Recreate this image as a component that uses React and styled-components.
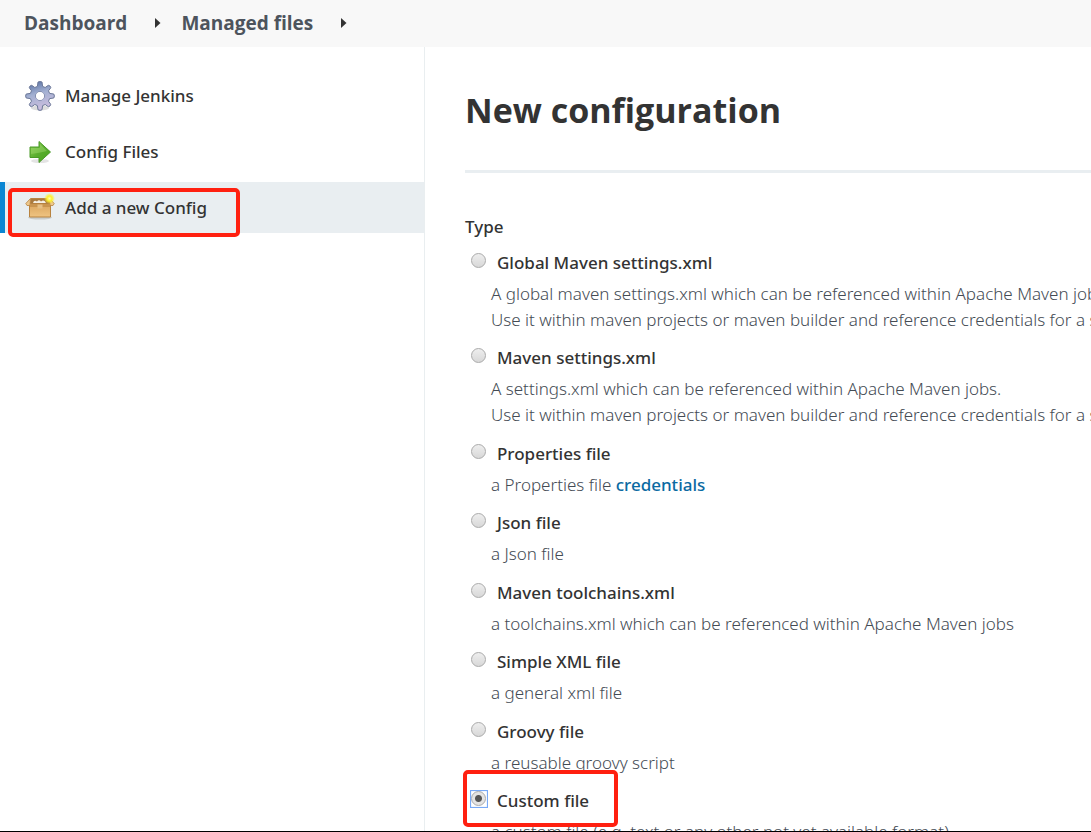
import React, { useState } from "react";
import styled, { createGlobalStyle, css } from "styled-components";

const GlobalStyle = createGlobalStyle`
  *, *::before, *::after { box-sizing: border-box; }
  body {
    margin: 0;
    background: #fff;
    color: #333;
    font-family: "Noto Sans", "Open Sans", sans-serif;
    font-size: 17px;
    line-height: 26px;
  }
`;

const Page = styled.div`
  display: flex;
  flex-direction: column;
  height: 100vh;
  overflow: hidden;
  border-bottom: 1px solid #000;
`;

const Breadcrumbs = styled.nav`
  display: flex;
  flex: none;
  align-items: center;
  height: 47px;
  padding: 0 24px 2px;
  background: #f8f8f8;
`;

const Crumb = styled.a`
  color: #4d545d;
  font-family: "Open Sans", sans-serif;
  font-size: 19px;
  font-weight: 700;
  text-decoration: none;
`;

const CrumbArrow = styled.svg`
  width: 6px;
  height: 10px;
  margin: 0 20px 0 28px;
  fill: #333;
`;

const Columns = styled.div`
  display: flex;
  flex: 1;
  min-height: 0;
`;

const SidePanel = styled.aside`
  flex: none;
  width: 425px;
  padding-top: 23px;
  border-right: 1px solid #e9eef0;
`;

const TaskList = styled.ul`
  display: flex;
  flex-direction: column;
  gap: 5px;
  margin: 0;
  padding: 0;
  list-style: none;
`;

const Task = styled.li`
  position: relative;
`;

const TaskLink = styled.a`
  display: flex;
  align-items: center;
  gap: 10px;
  height: 51px;
  padding-left: 20px;
  border-left: 5px solid ${(p) => (p.$active ? "#0b86d3" : "transparent")};
  background: ${(p) => (p.$active ? "#e9eef1" : "transparent")};
  color: #333;
  font-weight: 500;
  text-decoration: none;
`;

const TaskIcon = styled.svg`
  flex: none;
  width: 30px;
  height: 30px;
`;

const Highlight = styled.span`
  position: absolute;
  border: 4px solid #ff2010;
  border-radius: 5px;
  pointer-events: none;
  ${(p) =>
    p.$kind === "task"
      ? css`
          top: 6px;
          left: 8px;
          width: 232px;
          height: 49px;
        `
      : css`
          top: -18px;
          left: -2px;
          width: 155px;
          height: 57px;
        `}
`;

const Main = styled.main`
  flex: 1;
  min-width: 0;
  padding: 39px 0 0 40px;
  overflow: hidden;
`;

const Title = styled.h1`
  margin: 0;
  padding-bottom: 36px;
  border-bottom: 3px solid #e9eef1;
  font-family: "Open Sans", sans-serif;
  font-size: 34px;
  font-weight: 700;
  line-height: 48px;
`;

const TypeGroup = styled.fieldset`
  min-width: 0;
  margin: 41px 0 0;
  padding: 0;
  border: 0;
`;

const Legend = styled.legend`
  padding: 0;
  font-weight: 500;
`;

const OptionList = styled.div`
  padding-top: 10px;
`;

const Option = styled.div`
  position: relative;
  padding-bottom: 12px;

  &:nth-child(even) {
    padding-bottom: 13px;
  }
`;

const OptionLabel = styled.label`
  display: flex;
  gap: 11px;
  padding-left: 6px;
  font-weight: 500;
`;

const Radio = styled.input`
  appearance: none;
  flex: none;
  width: 15px;
  height: 15px;
  margin: 3px 0 0;
  border: 1px solid #aaa;
  border-radius: 50%;
  background: linear-gradient(#eee, #d8d8d8);

  &:checked {
    background: radial-gradient(circle, #555 0 3px, #e4e4e4 4px);
  }
`;

const RadioFrame = styled.span`
  position: absolute;
  top: 2px;
  left: 5px;
  width: 18px;
  height: 18px;
  border: 1px solid #78a9f6;
  box-shadow: inset 0 0 1px #78a9f6;
  pointer-events: none;
`;

const Description = styled.p`
  margin: 5px 0 0 26px;
  color: #444b54;
  font-weight: 300;
  white-space: pre;
`;

const InlineLink = styled.a`
  color: #0b6aa2;
  font-weight: 500;
  text-decoration: none;
`;

function Arrow() {
  return (
    <CrumbArrow viewBox="0 0 6 10" aria-hidden="true">
      <path d="M0 0 5.5 5 0 10Z" />
    </CrumbArrow>
  );
}

function GearIcon() {
  return (
    <TaskIcon viewBox="0 0 30 30" aria-hidden="true">
      <defs>
        <linearGradient id="gear" x1="0" y1="0" x2="0.3" y2="1">
          <stop offset="0" stopColor="#4f6a9e" />
          <stop offset="0.5" stopColor="#a3b0d2" />
          <stop offset="1" stopColor="#c9bddd" />
        </linearGradient>
      </defs>
      <ellipse cx="15" cy="27" rx="9" ry="2.5" fill="#ddd" />
      <path
        fill="url(#gear)"
        stroke="#6b7798"
        strokeLinejoin="round"
        fillRule="evenodd"
        d="M13 1Q15 0 17 1L17.600 5.400 20.200 6.500 23.300 4.300Q25.500 4.500 25.800 6.700L23.500 9.800 24.600 12.400 28.800 13Q30 15 28.800 17L24.600 17.600 23.500 20.200 25.700 23.300Q25.500 25.500 23.300 25.700L20.200 23.500 17.600 24.600 17 28.800Q15 30 13 28.800L12.400 24.600 9.800 23.500 6.700 25.700Q4.500 25.500 4.300 23.300L6.500 20.200 5.400 17.600 1.200 17Q0 15 1.200 13L5.400 12.400 6.500 9.800 4.300 6.700Q4.500 4.500 6.700 4.300L9.800 6.500 12.400 5.400ZM15 10.800A4.200 4.200 0 1 0 15 19.200A4.200 4.200 0 1 0 15 10.800Z"
      />
      <circle cx="15" cy="15" r="4" fill="#fff" />
    </TaskIcon>
  );
}

function ArrowIcon() {
  return (
    <TaskIcon viewBox="0 0 30 30" aria-hidden="true">
      <defs>
        <linearGradient id="arrow" x1="0" y1="0" x2="1" y2="1">
          <stop offset="0" stopColor="#8ed055" />
          <stop offset="0.5" stopColor="#59ad2e" />
          <stop offset="1" stopColor="#48a51d" />
        </linearGradient>
      </defs>
      <ellipse cx="15" cy="24" rx="9" ry="2" fill="#e4e4e4" />
      <path d="M5 10H14V4.500L25.500 15 14 25.500V20.500H5Z" fill="url(#arrow)" stroke="#4a9a28" />
      <path d="M6 11H15V7L22 14Q14 16 6 17Z" fill="#a2dc72" opacity=".45" />
    </TaskIcon>
  );
}

function PackageIcon() {
  return (
    <TaskIcon viewBox="0 0 30 30" aria-hidden="true">
      <defs>
        <linearGradient id="box" x1="0" y1="0" x2="0" y2="1">
          <stop offset="0" stopColor="#dba55e" />
          <stop offset="1" stopColor="#efc481" />
        </linearGradient>
        <radialGradient id="glow">
          <stop offset="0" stopColor="#ffffb0" />
          <stop offset="0.45" stopColor="#fff12c" />
          <stop offset="1" stopColor="#fff12c" stopOpacity="0" />
        </radialGradient>
      </defs>
      <ellipse cx="15" cy="24.500" rx="12" ry="2" fill="#c9cccb" />
      <path d="M6 5.500H24L26 11H4Z" fill="#a97a3f" stroke="#b98545" />
      <path d="M8 10Q9 6.500 12 8.500Q14 6 16 8.500Q19 6 21 10Z" fill="#f5efe3" />
      <path d="M4.500 11H25.500V24H4.500Z" fill="url(#box)" stroke="#b88340" />
      <path d="M5.500 5.500 .8 10.500 2 12.500H5ZM24.500 5.500 29.200 10.500 28 12.500H25Z" fill="#edc88d" stroke="#b88340" strokeWidth=".8" />
      <path d="M5 11H25V14H5Z" fill="#c9944f" />
      <path d="M12.500 11.500H17.500V15.500H12.500Z" fill="#e6bf84" />
      <circle cx="24.500" cy="5.500" r="5.500" fill="url(#glow)" />
    </TaskIcon>
  );
}

const TASKS = [
  { text: "Manage Jenkins", Icon: GearIcon },
  { text: "Config Files", Icon: ArrowIcon },
  { text: "Add a new Config", Icon: PackageIcon, active: true },
];

const CREDENTIALS_LINE =
  "Use it within maven projects or maven builder and reference credentials for a server";

const OPTIONS = [
  {
    id: "global-maven",
    name: "Global Maven settings.xml",
    text: `A global maven settings.xml which can be referenced within Apache Maven jobs.\n${CREDENTIALS_LINE}`,
  },
  {
    id: "maven",
    name: "Maven settings.xml",
    text: `A settings.xml which can be referenced within Apache Maven jobs.\n${CREDENTIALS_LINE}`,
  },
  { id: "properties", name: "Properties file", text: "a Properties file ", link: "credentials" },
  { id: "json", name: "Json file", text: "a Json file" },
  {
    id: "toolchains",
    name: "Maven toolchains.xml",
    text: "a toolchains.xml which can be referenced within Apache Maven jobs",
  },
  { id: "xml", name: "Simple XML file", text: "a general xml file" },
  { id: "groovy", name: "Groovy file", text: "a reusable groovy script" },
  {
    id: "custom",
    name: "Custom file",
    text: "a custom file (e.g. text or any other not yet available format)",
    highlighted: true,
  },
];

export default function App() {
  const [selected, setSelected] = useState("custom");
  return (
    <Page>
      <GlobalStyle />
      <Breadcrumbs aria-label="Breadcrumb">
        <Crumb href="#dashboard">Dashboard</Crumb>
        <Arrow />
        <Crumb href="#managed-files">Managed files</Crumb>
        <Arrow />
      </Breadcrumbs>
      <Columns>
        <SidePanel>
          <TaskList>
            {TASKS.map(({ text, Icon, active }) => (
              <Task key={text}>
                <TaskLink href="#task" $active={active}>
                  <Icon />
                  {text}
                </TaskLink>
                {active && <Highlight $kind="task" />}
              </Task>
            ))}
          </TaskList>
        </SidePanel>
        <Main>
          <Title>New configuration</Title>
          <TypeGroup>
            <Legend>Type</Legend>
            <OptionList>
              {OPTIONS.map((o) => (
                <Option key={o.id}>
                  <OptionLabel htmlFor={o.id}>
                    <Radio
                      type="radio"
                      id={o.id}
                      name="type"
                      checked={selected === o.id}
                      onChange={() => setSelected(o.id)}
                    />
                    {selected === o.id && <RadioFrame />}
                    {o.name}
                  </OptionLabel>
                  <Description>
                    {o.text}
                    {o.link && <InlineLink href="#credentials">{o.link}</InlineLink>}
                  </Description>
                  {o.highlighted && <Highlight $kind="option" />}
                </Option>
              ))}
            </OptionList>
          </TypeGroup>
        </Main>
      </Columns>
    </Page>
  );
}
